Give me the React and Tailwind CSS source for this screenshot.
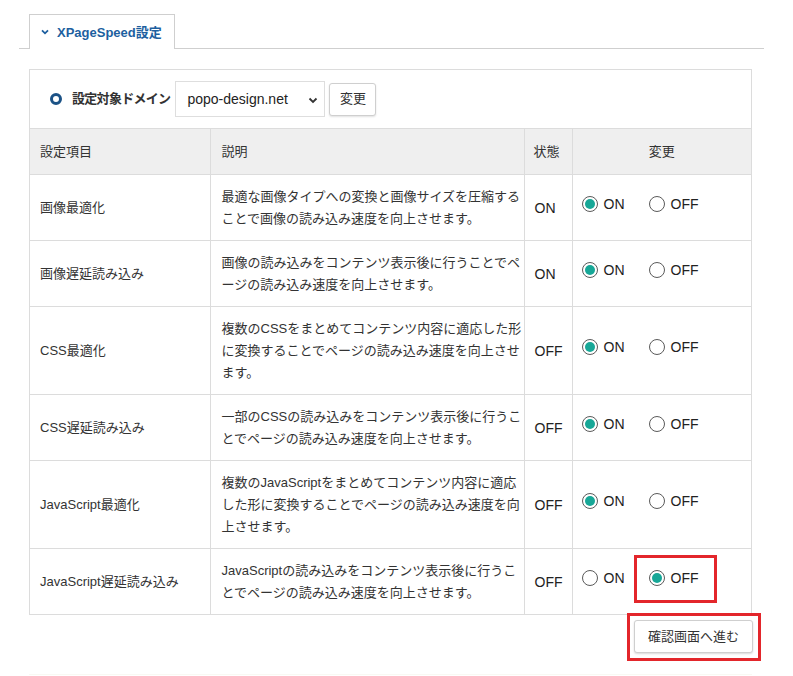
import React from "react";

const rows = [
  {
    name: "画像最適化",
    desc: ["最適な画像タイプへの変換と画像サイズを圧縮する", "ことで画像の読み込み速度を向上させます。"],
    status: "ON",
    on: true,
  },
  {
    name: "画像遅延読み込み",
    desc: ["画像の読み込みをコンテンツ表示後に行うことでペ", "ージの読み込み速度を向上させます。"],
    status: "ON",
    on: true,
  },
  {
    name: "CSS最適化",
    desc: ["複数のCSSをまとめてコンテンツ内容に適応した形", "に変換することでページの読み込み速度を向上させ", "ます。"],
    status: "OFF",
    on: true,
  },
  {
    name: "CSS遅延読み込み",
    desc: ["一部のCSSの読み込みをコンテンツ表示後に行うこ", "とでページの読み込み速度を向上させます。"],
    status: "OFF",
    on: true,
  },
  {
    name: "JavaScript最適化",
    desc: ["複数のJavaScriptをまとめてコンテンツ内容に適応", "した形に変換することでページの読み込み速度を向", "上させます。"],
    status: "OFF",
    on: true,
  },
  {
    name: "JavaScript遅延読み込み",
    desc: ["JavaScriptの読み込みをコンテンツ表示後に行うこ", "とでページの読み込み速度を向上させます。"],
    status: "OFF",
    on: false,
    highlight: true,
  },
];

function Radio({ checked }) {
  return (
    <span className="w-[16px] h-[16px] rounded-full border border-[#5a5a5a] bg-white flex items-center justify-center shrink-0">
      {checked && <span className="w-[10px] h-[10px] rounded-full bg-[#17a797]" />}
    </span>
  );
}

export default function App() {
  return (
    <div className="w-[793px] h-[676px] bg-white text-[#333] text-[13px] font-['Liberation_Sans','Noto_Sans_CJK_JP',sans-serif] overflow-hidden">
      {/* Tab bar */}
      <div className="pt-[14px] pl-[19px]">
        <div className="flex w-[745px] border-b border-[#cfcfcf]">
          <div className="ml-[10px] -mb-px w-[146px] h-[35px] border border-b-0 border-[#cfcfcf] bg-white flex items-center pl-[11px] gap-[8px]">
            <svg width="8" height="6" viewBox="0 0 8 6" className="shrink-0">
              <path d="M1 1.3 L4 4.3 L7 1.3" fill="none" stroke="#1d5f9f" strokeWidth="1.8" />
            </svg>
            <span className="text-[13px] font-bold text-[#1d5f9f] leading-none">XPageSpeed設定</span>
          </div>
        </div>
      </div>

      {/* Panel */}
      <div className="ml-[29px] mt-[20px] w-[723px] border border-[#dcdcdc]">
        <div className="h-[59px] flex items-center pl-[20px] border-b border-[#dcdcdc]">
          <span className="w-[12px] h-[12px] rounded-full border-[3px] border-[#1b5286] shrink-0" />
          <span className="ml-[10px] font-bold text-[13px] tracking-[-0.7px] text-[#333] whitespace-nowrap">設定対象ドメイン</span>
          <div className="ml-[5px] relative w-[150px] h-[36px] border border-[#dedede] bg-white flex items-center pl-[11px]">
            <span className="text-[14px] text-[#222]">popo-design.net</span>
            <svg width="10" height="7" viewBox="0 0 10 7" className="absolute right-[6px] top-[15px]">
              <path d="M1.5 1.5 L5 5 L8.5 1.5" fill="none" stroke="#333" strokeWidth="1.8" />
            </svg>
          </div>
          <button className="ml-[4px] w-[47px] h-[33px] border border-[#cfcfcf] rounded-[3px] bg-white shadow-[0_1px_2px_rgba(0,0,0,0.12)] text-[13px] text-[#333]">
            変更
          </button>
        </div>

        <table className="w-full table-fixed border-collapse border-hidden">
          <colgroup>
            <col className="w-[180px]" />
            <col className="w-[314px]" />
            <col className="w-[48px]" />
            <col />
          </colgroup>
          <thead>
            <tr className="bg-[#efefef]">
              <th className="border border-[#dcdcdc] text-left font-normal pl-[10px] py-[12px] leading-[21px]">設定項目</th>
              <th className="border border-[#dcdcdc] text-left font-normal pl-[11px] py-[12px] leading-[21px]">説明</th>
              <th className="border border-[#dcdcdc] text-left font-normal pl-[9px] py-[12px] leading-[21px]">状態</th>
              <th className="border border-[#dcdcdc] text-center font-normal py-[12px] leading-[21px]">変更</th>
            </tr>
          </thead>
          <tbody>
            {rows.map((r, i) => (
              <tr key={i}>
                <td className="border border-[#dcdcdc] pl-[10px] align-middle whitespace-nowrap">{r.name}</td>
                <td className="border border-[#dcdcdc] pl-[11px] pt-[11px] pb-[10px] leading-[22px] align-middle whitespace-nowrap overflow-visible">
                  {r.desc.map((l, j) => (
                    <div key={j}>{l}</div>
                  ))}
                </td>
                <td className="border border-[#dcdcdc] pl-[10px] pt-[2px] align-middle text-[14px] text-[#222] font-normal">{r.status}</td>
                <td className="border border-[#dcdcdc] pl-[9px] pb-[7px] align-middle">
                  <div className="flex items-center text-[14px] text-[#222]">
                    <span className="flex items-center gap-[6px]">
                      <Radio checked={r.on} />
                      <span className="leading-[16px]">ON</span>
                    </span>
                    <span className="relative ml-[24px] flex items-center gap-[6px]">
                      <Radio checked={!r.on} />
                      <span className="leading-[16px]">OFF</span>
                      {r.highlight && (
                        <span className="absolute left-[-15px] top-[-15px] w-[83px] h-[48px] border-[3px] border-[#e3262b]" />
                      )}
                    </span>
                  </div>
                </td>
              </tr>
            ))}
          </tbody>
        </table>
      </div>

      {/* Confirm button */}
      <div className="w-[764px] flex justify-end pr-[3px] -mt-[2px]">
        <div className="border-[3px] border-[#e3262b] pt-[4px] pb-[5px] pl-[4px] pr-[5px]">
          <button className="w-[119px] h-[33px] border border-[#cfcfcf] rounded-[3px] bg-white shadow-[0_1px_2px_rgba(0,0,0,0.15)] text-[13px] text-[#333]">
            確認画面へ進む
          </button>
        </div>
      </div>

      <div className="ml-[29px] mt-[13px] w-[723px] h-px bg-[#f9f9f3]" />
    </div>
  );
}
